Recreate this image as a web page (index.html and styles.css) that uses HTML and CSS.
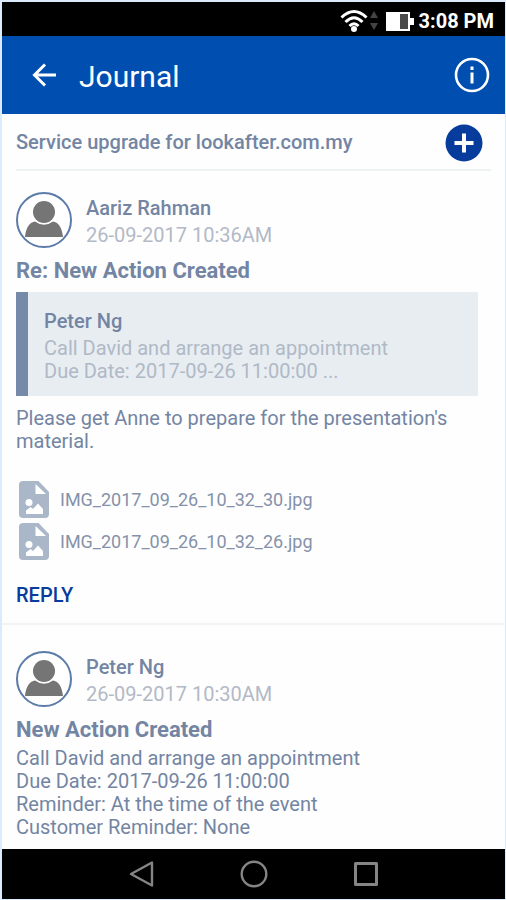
FILE: index.html
```
<!DOCTYPE html>
<html lang="en">

<head>
    <meta charset="UTF-8">
    <meta name="viewport" content="width=device-width, initial-scale=1.0">
    <title>Journal</title>
    <link rel="stylesheet" href="styles.css">
</head>

<body>
    <!-- Status bar -->
    <div class="status-bar">
        <svg class="wifi" width="38" height="24" viewBox="0 0 38 24">
            <g fill="none" stroke="#fff" stroke-width="3">
                <path d="M1.500 8.500 Q14 -3.500 26.500 8.500"></path>
                <path d="M5.500 13 Q14 4.500 22.500 13"></path>
                <path d="M9.500 17 Q14 12.500 18.500 17"></path>
            </g>
            <circle cx="14" cy="20" r="3" fill="#fff"></circle>
            <path d="M30 9 L34 2 L38 9 Z M30 14 L34 21 L38 14 Z" fill="#444"></path>
        </svg>
        <svg class="battery" width="28" height="19" viewBox="0 0 28 19">
            <path d="M0 0 H24 V6 H28 V13 H24 V19 H0 Z" fill="#fff"></path>
            <rect x="14" y="2" width="8" height="15" fill="#4a4a4a"></rect>
        </svg>
        <span class="time">3:08 PM</span>
    </div>

    <header class="app-bar">
        <button class="icon-button" type="button" aria-label="Back">
            <svg width="24" height="24" viewBox="0 0 24 24" fill="none" stroke="#fff" stroke-width="3">
                <path d="M13 1.500 L2.500 12 L13 22.500 M2.500 12 H24"></path>
            </svg>
        </button>
        <h1>Journal</h1>
        <button class="icon-button" type="button" aria-label="Information">
            <svg width="36" height="36" viewBox="0 0 36 36">
                <circle cx="18" cy="18" r="16" fill="none" stroke="#fff" stroke-width="2.600"></circle>
                <path d="M16.500 9.500 h3 v3.500 h-3 Z M16.500 15.500 h3 v11 h-3 Z" fill="#fff"></path>
            </svg>
        </button>
    </header>

    <main class="content">
        <div class="subject">
            <h2>Service upgrade for lookafter.com.my</h2>
            <button class="icon-button" type="button" aria-label="Add entry">
                <svg width="38" height="38" viewBox="0 0 38 38">
                    <circle cx="19" cy="19" r="18.500" fill="#083c9c"></circle>
                    <path d="M19 9.500 V28.500 M9.500 19 H28.500" stroke="#fff" stroke-width="4"></path>
                </svg>
            </button>
        </div>

        <article class="entry">
            <div class="entry-head">
                <svg class="avatar" width="56" height="56" viewBox="0 0 56 56">
                    <circle cx="28" cy="28" r="27" fill="#fff" stroke="#5b7ba8" stroke-width="2"></circle>
                    <circle cx="28" cy="20" r="11" fill="#757575"></circle>
                    <path d="M9 45 C10 35 14 30 19 29.500 Q28 36 37 29.500 C42 30 46 35 47 45 Z" fill="#757575"></path>
                </svg>
                <div>
                    <div class="author">Aariz Rahman</div>
                    <div class="date">26-09-2017 10:36AM</div>
                </div>
            </div>
            <h3>Re: New Action Created</h3>
            <blockquote class="quote">
                <div class="author">Peter Ng</div>
                <p>Call David and arrange an appointment<br>Due Date: 2017-09-26 11:00:00 ...</p>
            </blockquote>
            <p class="message">Please get Anne to prepare for the presentation's material.</p>
            <ul class="attachments">
                <li>
                    <a href="#">
                        <svg width="30" height="37" viewBox="0 0 30 37">
                            <path d="M4 0 H19.500 L30 11 V33 Q30 37 26 37 H4 Q0 37 0 33 V4 Q0 0 4 0 Z" fill="#a9b7c9"></path>
                            <path d="M16.500 3 V13 H27 Z" fill="#fff"></path>
                            <circle cx="10" cy="21.500" r="3.500" fill="#fff"></circle>
                            <path d="M7 33 V29.500 L11.500 26 L14 28 L19 22.500 L24 28 V33 Z" fill="#fff"></path>
                        </svg>
                        IMG_2017_09_26_10_32_30.jpg
                    </a>
                </li>
                <li>
                    <a href="#">
                        <svg width="30" height="37" viewBox="0 0 30 37">
                            <path d="M4 0 H19.500 L30 11 V33 Q30 37 26 37 H4 Q0 37 0 33 V4 Q0 0 4 0 Z" fill="#a9b7c9"></path>
                            <path d="M16.500 3 V13 H27 Z" fill="#fff"></path>
                            <circle cx="10" cy="21.500" r="3.500" fill="#fff"></circle>
                            <path d="M7 33 V29.500 L11.500 26 L14 28 L19 22.500 L24 28 V33 Z" fill="#fff"></path>
                        </svg>
                        IMG_2017_09_26_10_32_26.jpg
                    </a>
                </li>
            </ul>
            <button class="reply" type="button">REPLY</button>
        </article>

        <article class="entry">
            <div class="entry-head">
                <svg class="avatar" width="56" height="56" viewBox="0 0 56 56">
                    <circle cx="28" cy="28" r="27" fill="#fff" stroke="#5b7ba8" stroke-width="2"></circle>
                    <circle cx="28" cy="20" r="11" fill="#757575"></circle>
                    <path d="M9 45 C10 35 14 30 19 29.500 Q28 36 37 29.500 C42 30 46 35 47 45 Z" fill="#757575"></path>
                </svg>
                <div>
                    <div class="author">Peter Ng</div>
                    <div class="date">26-09-2017 10:30AM</div>
                </div>
            </div>
            <h3>New Action Created</h3>
            <p class="details">Call David and arrange an appointment<br>
                Due Date: 2017-09-26 11:00:00<br>
                Reminder: At the time of the event<br>
                Customer Reminder: None</p>
        </article>
    </main>

    <!-- System navigation -->
    <nav class="nav-bar">
        <button class="icon-button" type="button" aria-label="Back">
            <svg width="28" height="28" viewBox="0 0 28 28" fill="none" stroke="#858585" stroke-width="2.400" stroke-linejoin="round">
                <path d="M24 2.500 V25.500 L3 14 Z"></path>
            </svg>
        </button>
        <button class="icon-button" type="button" aria-label="Home">
            <svg width="28" height="28" viewBox="0 0 28 28" fill="none" stroke="#858585" stroke-width="2.400">
                <circle cx="14" cy="14" r="12.300"></circle>
            </svg>
        </button>
        <button class="icon-button" type="button" aria-label="Recent apps">
            <svg width="28" height="28" viewBox="0 0 28 28" fill="none" stroke="#858585" stroke-width="3" stroke-linejoin="round">
                <rect x="3.500" y="3.500" width="21" height="21"></rect>
            </svg>
        </button>
    </nav>
</body>

</html>
```
FILE: styles.css
```
* {
    box-sizing: border-box;
}

body {
    font-family: Roboto, sans-serif;
    font-size: 20px;
    line-height: 23px;
    color: #7385a3;
    margin: 0;
    padding: 2px 1px 1px 2px;
    min-height: 100vh;
    display: flex;
    flex-direction: column;
    background-color: #dcebfc;
}

h1,
h2,
h3,
p {
    margin: 0;
}

svg {
    display: block;
    flex-shrink: 0;
}

.icon-button {
    background: none;
    border: none;
    padding: 0;
    cursor: pointer;
}

/* Status bar */
.status-bar {
    display: flex;
    align-items: center;
    justify-content: flex-end;
    height: 34px;
    padding: 4px 11px 0 0;
    background-color: #000;
    color: #fff;
}

.battery {
    margin: 0 5px 0 8px;
}

.time {
    font-weight: 700;
}

/* App bar */
.app-bar {
    display: flex;
    align-items: center;
    height: 78px;
    padding: 0 15px 0 30px;
    background-color: #004fb0;
    color: #fff;
}

.app-bar h1 {
    flex: 1;
    margin-left: 23px;
    padding-top: 3px;
    font-size: 30px;
    font-weight: 400;
    line-height: 36px;
}

/* Journal */
.content {
    flex: 1;
    background-color: #fefefe;
}

.subject {
    display: flex;
    align-items: center;
    justify-content: space-between;
    height: 57px;
    margin: 0 14px;
    padding: 2px 8px 0 0;
    border-bottom: 2px solid #eff2f3;
}

.subject h2 {
    font-size: 20px;
    font-weight: 500;
}

.entry {
    padding: 21px 14px 16px;
}

.entry + .entry {
    border-top: 2px solid #f2f4f6;
    padding-top: 26px;
    padding-bottom: 8px;
}

.entry-head {
    display: flex;
    gap: 14px;
}

.author {
    padding-top: 5px;
    font-weight: 500;
}

.date {
    padding-top: 4px;
    color: #b3b9c6;
}

.entry h3 {
    margin-top: 9px;
    font-size: 22px;
    font-weight: 700;
    line-height: 28px;
}

.quote {
    margin: 7px 13px 11px 0;
    padding: 13px 16px;
    border-left: 12px solid #748aa8;
    background-color: #e8edf2;
}

.quote p {
    padding-top: 4px;
    color: #b0b9c6;
}

.details {
    padding-top: 3px;
}

.attachments {
    list-style: none;
    margin: 25px 0 0;
    padding: 0 0 0 3px;
}

.attachments a {
    display: flex;
    align-items: center;
    gap: 11px;
    height: 42px;
    color: #8592aa;
    font-size: 18px;
    text-decoration: none;
}

.reply {
    display: block;
    margin-top: 22px;
    padding: 0;
    border: none;
    background: none;
    color: #083c9c;
    font-family: inherit;
    font-size: 20px;
    font-weight: 500;
    line-height: 23px;
    cursor: pointer;
}

/* System navigation */
.nav-bar {
    display: flex;
    align-items: center;
    justify-content: center;
    gap: 84px;
    height: 50px;
    background-color: #000;
}
```
